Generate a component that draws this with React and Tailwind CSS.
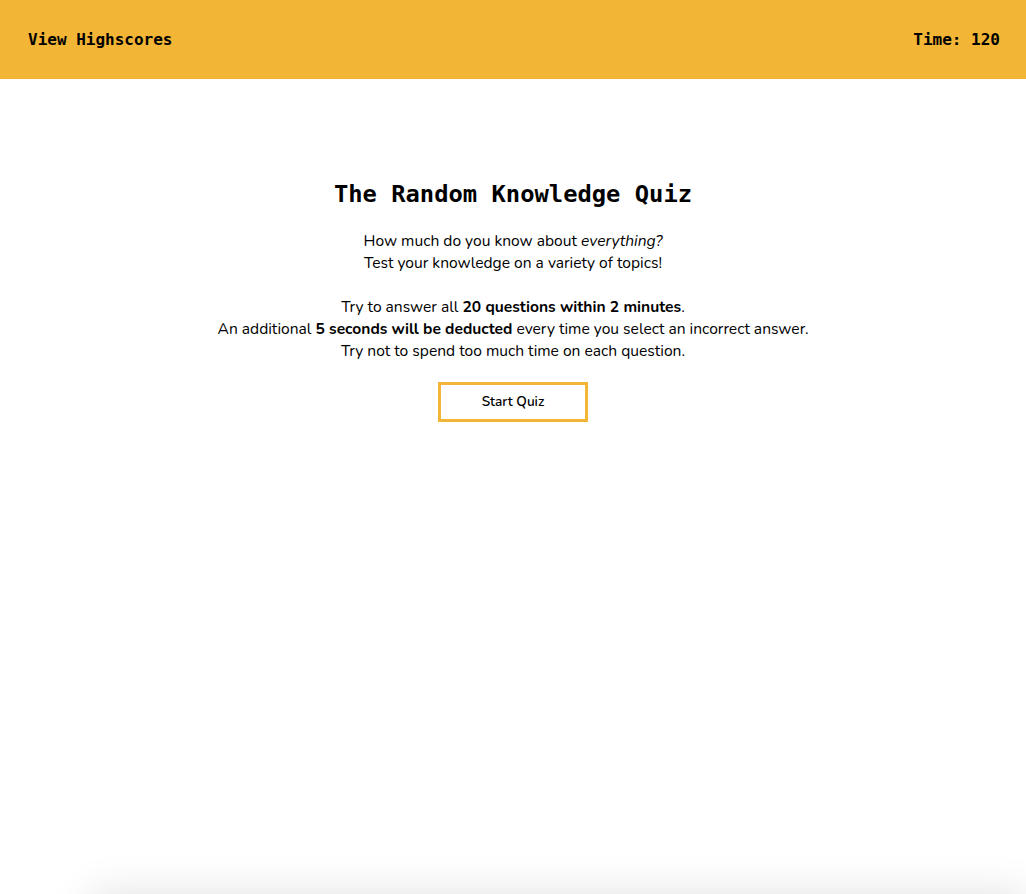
import React from 'react';

const App = () => {
  return (
    <div className="min-h-screen bg-white text-black font-['Nunito','Lato','Noto_Sans',sans-serif]">
      <header className="h-[79px] bg-[#f2b535] flex items-center justify-between pl-[28px] pr-[26px]">
        <a href="#" className="font-['DejaVu_Sans_Mono','Liberation_Mono',monospace] font-bold text-base">
          View Highscores
        </a>
        <span className="font-['DejaVu_Sans_Mono','Liberation_Mono',monospace] font-bold text-base">
          Time: 120
        </span>
      </header>

      <main className="flex flex-col items-center text-center pt-[99px] h-[815px]">
        <h1 className="font-['DejaVu_Sans_Mono','Liberation_Mono',monospace] font-bold text-[23.8px] leading-8">
          The Random Knowledge Quiz
        </h1>
        <p className="mt-5 text-[15.6px] leading-[22px]">
          How much do you know about <em>everything?</em>
          <br />
          Test your knowledge on a variety of topics!
          <br />
          <br />
          Try to answer all <strong>20 questions within 2 minutes</strong>.
          <br />
          An additional <strong>5 seconds will be deducted</strong> every time you select an incorrect answer.
          <br />
          Try not to spend too much time on each question.
        </p>
        <button className="mt-5 w-[150px] h-10 border-[3px] border-[#f2b535] bg-white text-[13.6px] font-semibold">
          Start Quiz
        </button>
      </main>

      <div className="ml-[90px] h-[200px] bg-white shadow-[0_0_40px_rgba(0,0,0,0.12)]"></div>
    </div>
  );
};

export default App;
